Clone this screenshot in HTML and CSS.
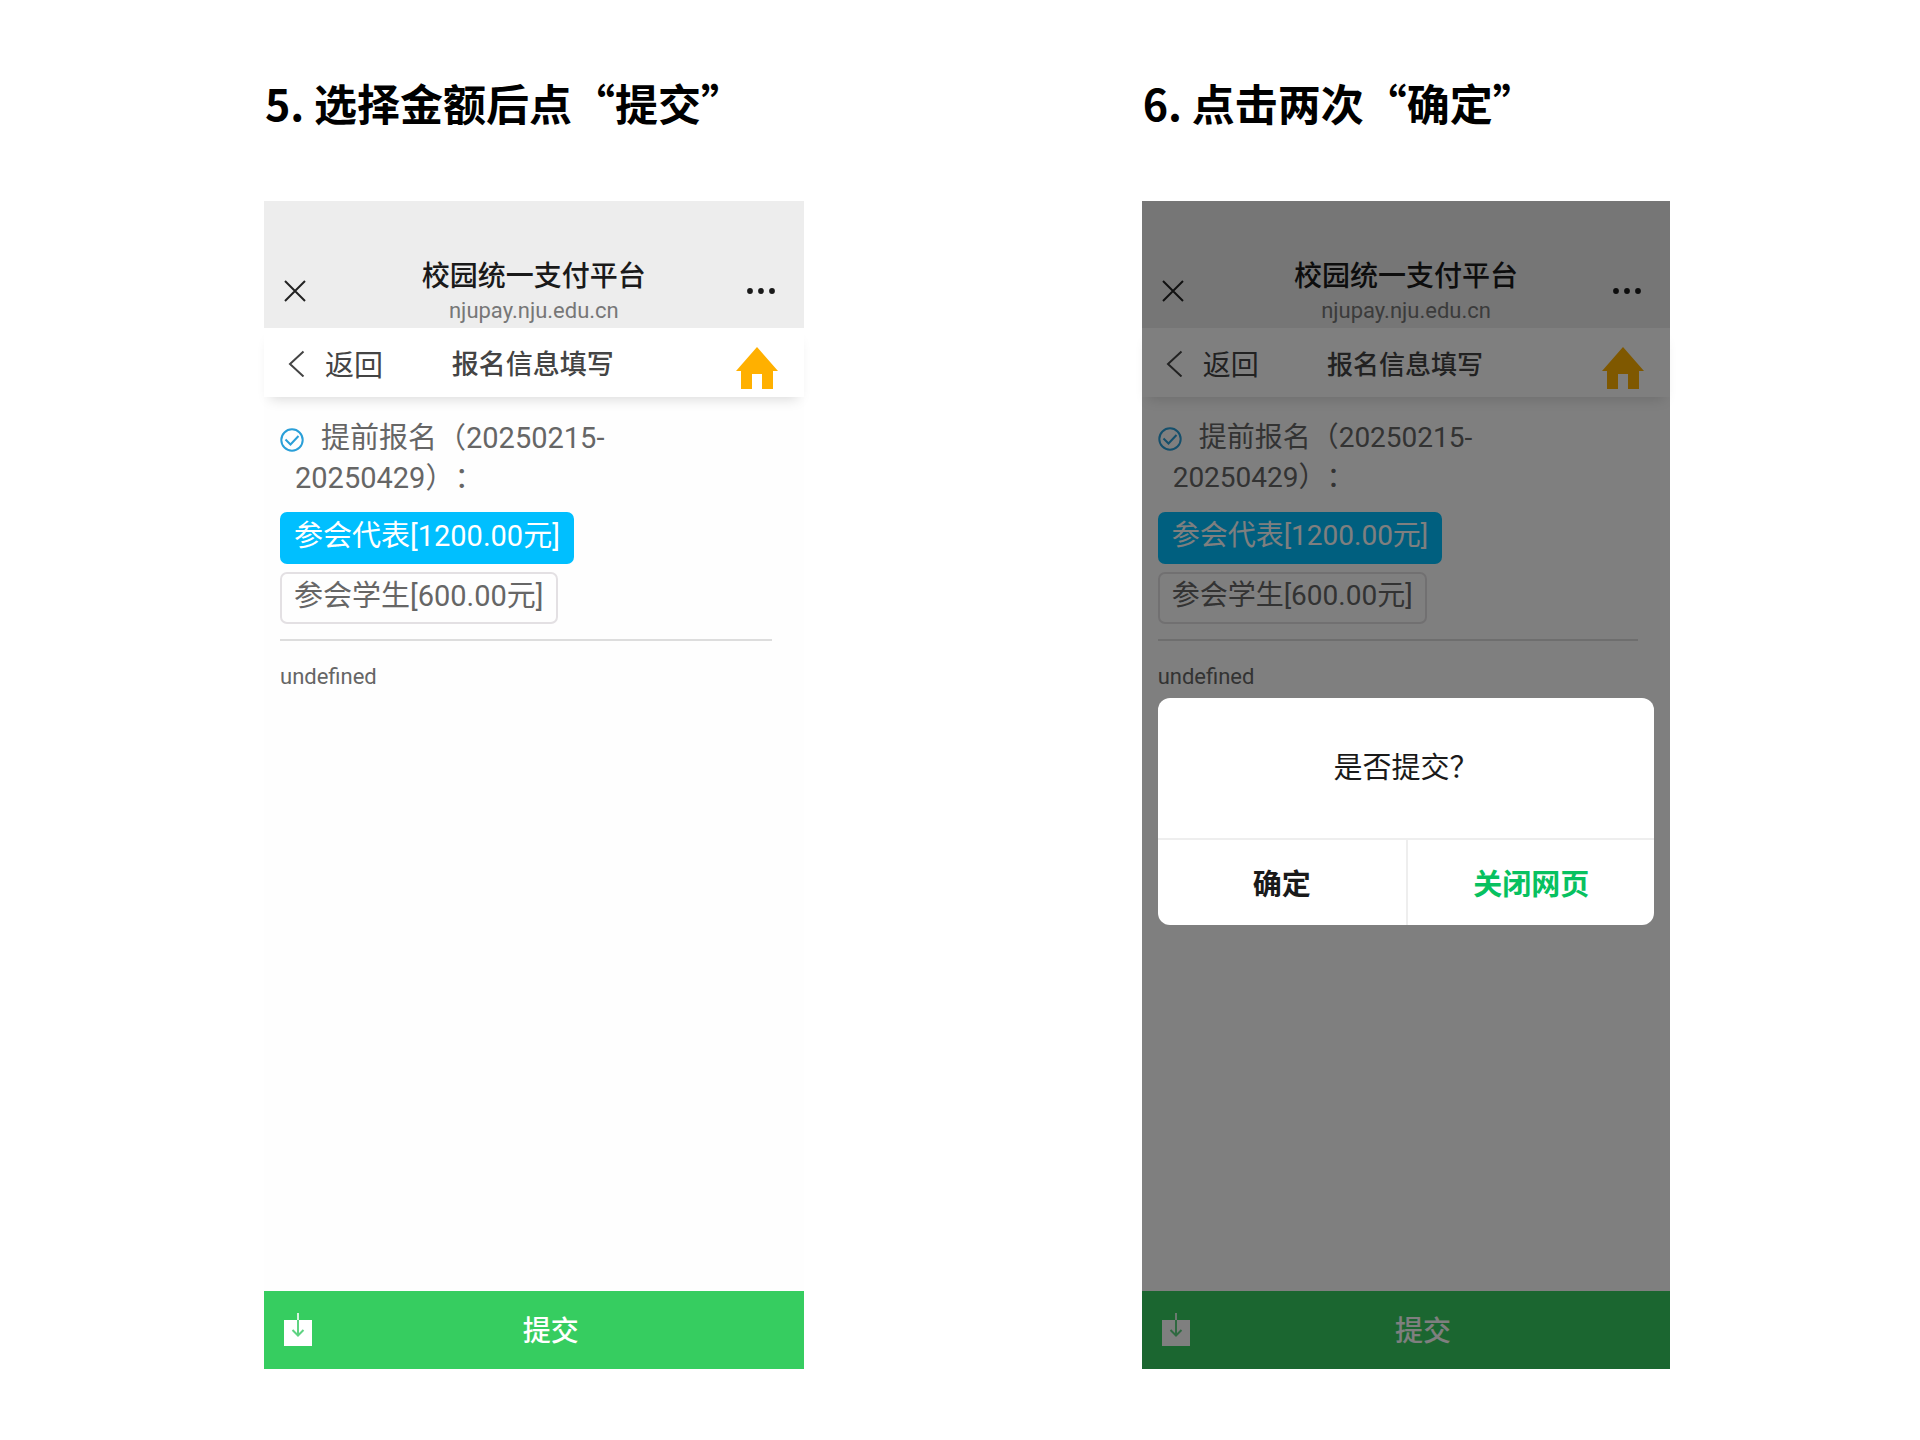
FILE: index.html
```html
<!DOCTYPE html>
<html lang="zh-CN">

<head>
    <meta charset="UTF-8">
    <meta name="viewport" content="width=device-width, initial-scale=1.0">
    <title>校园统一支付平台</title>
    <link rel="stylesheet" href="styles.css">
</head>

<body>
    <div class="container">
        <section class="step">
            <h2>5. 选择金额后点“提交”</h2>
            <div class="phone">
                <header class="app-bar">
                    <button class="icon-button" aria-label="关闭">
                        <svg width="22" height="22" viewBox="0 0 22 22"><path d="M1 1l20 20M21 1l-20 20" fill="none" stroke="#222" stroke-width="2"/></svg>
                    </button>
                    <div class="app-title">
                        <h3>校园统一支付平台</h3>
                        <p>njupay.nju.edu.cn</p>
                    </div>
                    <button class="icon-button" aria-label="更多">
                        <svg width="30" height="22" viewBox="0 0 30 22"><circle cx="4" cy="11" r="2.9" fill="#1a1a1a"/><circle cx="15" cy="11" r="2.9" fill="#1a1a1a"/><circle cx="26" cy="11" r="2.9" fill="#1a1a1a"/></svg>
                    </button>
                </header>
                <nav class="nav-bar">
                    <button class="back">
                        <svg width="17" height="28" viewBox="0 0 17 28"><path d="M15.5 2.500L2 15l13.5 12.5" fill="none" stroke="#444" stroke-width="2"/></svg>
                        返回
                    </button>
                    <h4>报名信息填写</h4>
                    <a class="home" href="#" aria-label="首页">
                        <svg width="42" height="42" viewBox="0 0 42 42"><path d="M21 0L42 24h-5v18H26V27H16v15H5V24H0z" fill="#ffb000"/></svg>
                    </a>
                </nav>
                <main class="content">
                    <p class="item-name"><svg class="check" width="24" height="24" viewBox="0 0 24 24"><circle cx="12" cy="12" r="10.7" fill="none" stroke="#2a9fd8" stroke-width="2"/><path d="M5.5 11.5l5 5 8-8.5" fill="none" stroke="#2a9fd8" stroke-width="2"/></svg>提前报名（20250215-<br>20250429）：</p>
                    <button class="option selected">参会代表[1200.00元]</button>
                    <button class="option">参会学生[600.00元]</button>
                    <hr>
                    <p class="remark">undefined</p>
                </main>
                <footer class="submit-bar">
                    <button class="save" aria-label="保存">
                        <svg width="28" height="33" viewBox="0 0 28 33"><path d="M0 7h28v26H0z" fill="#fff"/><path d="M14 0v7" stroke="#d5f3de" stroke-width="2"/><path d="M14 7v15M8.500 17l5.500 5.500 5.500-5.500" fill="none" stroke="#5fd382" stroke-width="2"/></svg>
                    </button>
                    <button class="submit">提交</button>
                </footer>
            </div>
        </section>

        <section class="step">
            <h2>6. 点击两次“确定”</h2>
            <div class="phone phone-small">
                <header class="app-bar">
                    <button class="icon-button" aria-label="关闭">
                        <svg width="22" height="22" viewBox="0 0 22 22"><path d="M1 1l20 20M21 1l-20 20" fill="none" stroke="#222" stroke-width="2"/></svg>
                    </button>
                    <div class="app-title">
                        <h3>校园统一支付平台</h3>
                        <p>njupay.nju.edu.cn</p>
                    </div>
                    <button class="icon-button" aria-label="更多">
                        <svg width="30" height="22" viewBox="0 0 30 22"><circle cx="4" cy="11" r="2.9" fill="#1a1a1a"/><circle cx="15" cy="11" r="2.9" fill="#1a1a1a"/><circle cx="26" cy="11" r="2.9" fill="#1a1a1a"/></svg>
                    </button>
                </header>
                <nav class="nav-bar">
                    <button class="back">
                        <svg width="17" height="28" viewBox="0 0 17 28"><path d="M15.5 2.500L2 15l13.5 12.5" fill="none" stroke="#444" stroke-width="2"/></svg>
                        返回
                    </button>
                    <h4>报名信息填写</h4>
                    <a class="home" href="#" aria-label="首页">
                        <svg width="42" height="42" viewBox="0 0 42 42"><path d="M21 0L42 24h-5v18H26V27H16v15H5V24H0z" fill="#ffb000"/></svg>
                    </a>
                </nav>
                <main class="content">
                    <p class="item-name"><svg class="check" width="24" height="24" viewBox="0 0 24 24"><circle cx="12" cy="12" r="10.7" fill="none" stroke="#2a9fd8" stroke-width="2"/><path d="M5.5 11.5l5 5 8-8.5" fill="none" stroke="#2a9fd8" stroke-width="2"/></svg>提前报名（20250215-<br>20250429）：</p>
                    <button class="option selected">参会代表[1200.00元]</button>
                    <button class="option">参会学生[600.00元]</button>
                    <hr>
                    <p class="remark">undefined</p>
                </main>
                <footer class="submit-bar">
                    <button class="save" aria-label="保存">
                        <svg width="28" height="33" viewBox="0 0 28 33"><path d="M0 7h28v26H0z" fill="#fff"/><path d="M14 0v7" stroke="#d5f3de" stroke-width="2"/><path d="M14 7v15M8.500 17l5.500 5.500 5.500-5.500" fill="none" stroke="#5fd382" stroke-width="2"/></svg>
                    </button>
                    <button class="submit">提交</button>
                </footer>

                <!-- Confirm dialog -->
                <div class="mask">
                    <div class="dialog" role="dialog" aria-label="是否提交？">
                        <p>是否提交？</p>
                        <div class="dialog-buttons">
                            <button>确定</button>
                            <button class="primary">关闭网页</button>
                        </div>
                    </div>
                </div>
            </div>
        </section>
    </div>
</body>

</html>
```

FILE: styles.css
```css
* {
    box-sizing: border-box;
}

body {
    margin: 0;
    background-color: #fff;
    font-family: Roboto, "Noto Sans CJK SC", sans-serif;
    text-spacing-trim: space-all;
}

h2, h3, h4, p {
    margin: 0;
}

button {
    padding: 0;
    border: none;
    background: none;
    font-family: inherit;
    color: inherit;
    cursor: pointer;
}

svg {
    display: block;
}

.container {
    display: grid;
    grid-template-columns: 540fr 529fr;
    column-gap: 17.6vw;
    min-height: 100vh;
    padding: 70px 13vw 71px 13.75vw;
}

.step {
    display: flex;
    flex-direction: column;
}

.step h2 {
    padding-left: 1px;
    margin-bottom: 67px;
    font-family: "Noto Sans CJK SC", sans-serif;
    font-size: 43px;
    line-height: 64px;
    font-weight: bold;
    color: #000;
}

.phone {
    --text: 29px;
    --nav-title: 27px;
    position: relative;
    flex: 1;
    display: flex;
    flex-direction: column;
    background-color: #fefefe;
}

.phone-small {
    --text: 28px;
    --nav-title: 26px;
}

/* Top bar with the page title and address */
.app-bar {
    display: flex;
    justify-content: space-between;
    align-items: flex-end;
    height: 127px;
    padding: 0 28px 3px 20px;
    background-color: #ededed;
}

.icon-button {
    width: 30px;
    padding-bottom: 23px;
}

.app-title {
    padding-left: 8px;
    text-align: center;
}

.app-title h3 {
    font-size: 28px;
    line-height: 40px;
    font-weight: 500;
    color: #1a1a1a;
}

.app-title p {
    font-size: 22px;
    line-height: 28px;
    color: #777;
}

.nav-bar {
    display: grid;
    grid-template-columns: 1fr auto 1fr;
    align-items: center;
    height: 69px;
    padding: 0 26px 0 24px;
    background-color: #fff;
    box-shadow: 0 8px 12px -6px rgba(0, 0, 0, 0.15);
}

.back {
    display: flex;
    align-items: center;
    gap: 20px;
    font-size: var(--text);
    color: #444;
}

.nav-bar h4 {
    font-size: var(--nav-title);
    font-weight: 500;
    color: #444;
}

.home {
    justify-self: end;
    padding-top: 10px;
}

.content {
    flex: 1;
    display: flex;
    flex-direction: column;
    align-items: flex-start;
    padding: 21px 32px 0 16px;
    color: #666;
}

.item-name {
    padding-left: 15px;
    margin-bottom: 14px;
    font-size: var(--text);
    line-height: 40px;
}

.check {
    display: inline-block;
    margin: 0 17px 0 -15px;
    vertical-align: -4px;
}

.option {
    height: 52px;
    padding: 0 12px 5px;
    margin-bottom: 8px;
    border: 2px solid #e3e0e3;
    border-radius: 7px;
    font-size: var(--text);
    line-height: 40px;
}

.option.selected {
    border-color: #00bfff;
    background-color: #00bfff;
    color: #fff;
}

.content hr {
    width: 100%;
    margin: 7px 0 20px;
    border: none;
    border-top: 2px solid #ddd;
}

.remark {
    font-size: 22px;
    line-height: 32px;
}

.submit-bar {
    display: flex;
    align-items: center;
    height: 78px;
    padding-bottom: 2px;
    background-color: #36cd60;
    color: #fff;
}

.save {
    padding: 0 3px 0 20px;
}

.submit {
    flex: 1;
    align-self: stretch;
    padding-right: 17px;
    font-size: 28px;
    font-weight: 500;
}

.mask {
    position: absolute;
    inset: 0;
    display: flex;
    align-items: center;
    padding: 52px 16px 0;
    background-color: rgba(0, 0, 0, 0.5);
}

.dialog {
    flex: 1;
    border-radius: 12px;
    background-color: #fff;
    color: #1a1a1a;
    font-size: 29px;
    text-align: center;
}

.dialog p {
    padding: 50px 0;
    line-height: 40px;
}

.dialog-buttons {
    display: grid;
    grid-template-columns: 1fr 1fr;
    border-top: 2px solid #eee;
}

.dialog-buttons button {
    height: 85px;
    font-size: inherit;
    font-weight: bold;
}

.dialog-buttons .primary {
    border-left: 2px solid #eee;
    color: #07c160;
}
```
